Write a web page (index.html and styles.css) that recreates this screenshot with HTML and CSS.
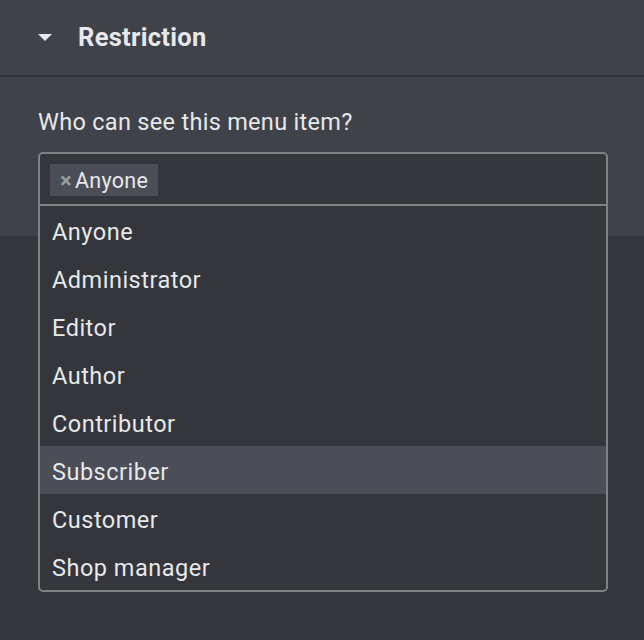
FILE: index.html
```html
<!DOCTYPE html>
<html>
<head>
<meta charset="utf-8">
<link rel="stylesheet" href="styles.css">
</head>
<body>
<div class="panel">
  <div class="header">
    <svg class="caret" width="14" height="8" viewBox="0 0 14 8"><polygon points="0,0 14,0 7,7" fill="#e6e8eb"/></svg>
    <span class="title">Restriction</span>
  </div>
  <div class="content">
    <div class="label">Who can see this menu item?</div>
    <div class="select">
      <div class="input">
        <span class="tag"><span class="x">×</span>Anyone</span>
      </div>
      <ul class="options">
        <li>Anyone</li>
        <li>Administrator</li>
        <li>Editor</li>
        <li>Author</li>
        <li>Contributor</li>
        <li class="hl">Subscriber</li>
        <li>Customer</li>
        <li>Shop manager</li>
      </ul>
    </div>
  </div>
</div>
</body>
</html>
```
FILE: styles.css
```css
* { box-sizing: border-box; }
html, body { margin: 0; padding: 0; }
body {
  background: #34363b;
  font-family: Roboto, "Noto Sans", sans-serif;
  color: #e6e8eb;
  width: 644px;
  height: 640px;
  overflow: hidden;
}
.panel {
  background: #404249;
  height: 236px;
}
.header {
  height: 77px;
  border-bottom: 2px solid #313338;
  display: flex;
  align-items: center;
  padding-left: 38px;
  padding-bottom: 2px;
}
.caret { margin-right: 26px; margin-top: 2px; }
.title {
  font-size: 25.5px;
  font-weight: 700;
  letter-spacing: 0.3px;
  color: #e6e8eb;
}
.content {
  padding: 31px 36px 0 38px;
  position: relative;
}
.label {
  font-size: 23.5px;
  font-weight: 400;
  letter-spacing: 0.3px;
  line-height: 28px;
  margin-bottom: 16px;
}
.select {
  position: relative;
  z-index: 1;
  width: 570px;
  border: 2px solid #7f8185;
  border-radius: 5px;
  background: #34363b;
}
.input {
  height: 52px;
  border-bottom: 2px solid #7f8185;
  padding: 10px 10px;
}
.tag {
  display: inline-flex;
  align-items: center;
  height: 32px;
  background: #4b4e56;
  padding: 0 10px 0 10px;
  font-size: 21.5px;
  font-weight: 400;
  letter-spacing: 0.3px;
  color: #e6e8eb;
}
.tag .x {
  color: #9a9ca0;
  font-weight: 700;
  font-size: 22px;
  margin-right: 3px;
}
.options {
  list-style: none;
  margin: 0;
  padding: 0;
}
.options li {
  height: 48px;
  line-height: 46px;
  padding-top: 3px;
  padding-left: 12px;
  font-size: 23.5px;
  font-weight: 400;
  letter-spacing: 0.5px;
  color: #e6e8eb;
}
.options li.hl { background: #4b4e56; }
```
